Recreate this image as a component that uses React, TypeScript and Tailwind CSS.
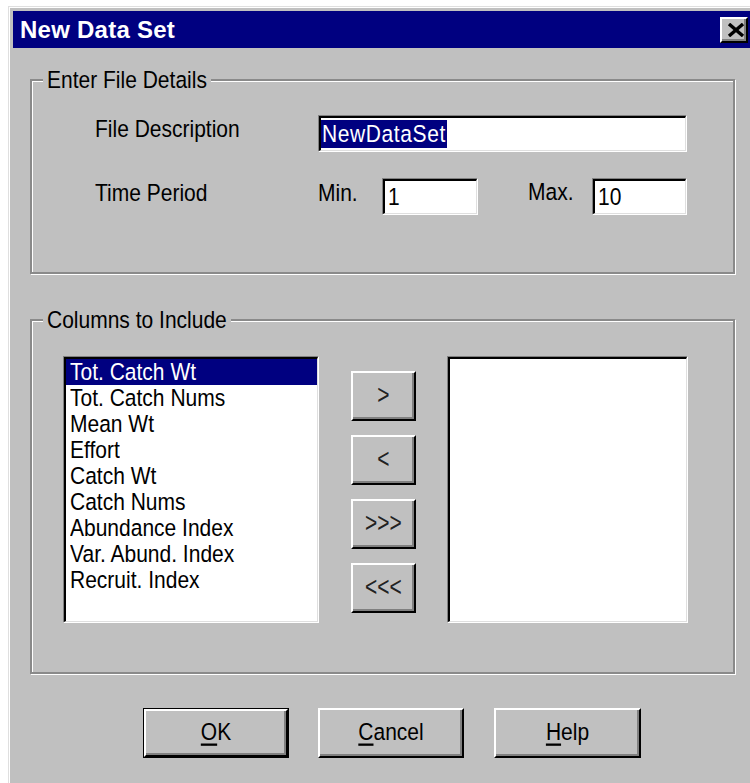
import React from "react";

const columns = [
  "Tot. Catch Wt",
  "Tot. Catch Nums",
  "Mean Wt",
  "Effort",
  "Catch Wt",
  "Catch Nums",
  "Abundance Index",
  "Var. Abund. Index",
  "Recruit. Index",
];

// Dialog text: the system font here is drawn a little taller than it is wide
function T({ children, className = "" }: { children?: React.ReactNode; className?: string }) {
  return <span className={`inline-block origin-center scale-y-[1.15] ${className}`}>{children}</span>;
}

// Sunken 3D field used by edit boxes and list boxes
function Sunken({ className = "", children }: { className?: string; children?: React.ReactNode }) {
  return (
    <div
      className={`border-t border-l border-t-[#808080] border-l-[#808080] border-b border-r border-b-white border-r-white ${className}`}
    >
      <div className="h-full w-full overflow-hidden border-t-2 border-l-2 border-t-black border-l-black border-b border-r border-b-[#dfdfdf] border-r-[#dfdfdf] bg-white">
        {children}
      </div>
    </div>
  );
}

// Raised 3D push button face
function Raised({ className = "", children }: { className?: string; children?: React.ReactNode }) {
  return (
    <div
      className={`flex items-center justify-center border-t-2 border-l-2 border-t-white border-l-white border-b-2 border-r-2 border-b-black border-r-black bg-[#c0c0c0] shadow-[inset_-2px_-2px_0_#808080] ${className}`}
    >
      {children}
    </div>
  );
}

// Etched group frame with caption sitting on the top edge
function Group({
  label,
  className = "",
  children,
}: {
  label: string;
  className?: string;
  children?: React.ReactNode;
}) {
  return (
    <div
      className={`relative border-2 border-[#8a8a8a] shadow-[inset_1px_1px_0_#fff,1px_1px_0_#fff] ${className}`}
    >
      <span className="absolute left-[11px] -top-[13px] bg-[#c0c0c0] px-[4px] leading-[24px]">
        <T>{label}</T>
      </span>
      {children}
    </div>
  );
}

function Mnemonic({ first, rest }: { first: string; rest: string }) {
  return (
    <T className="leading-[24px]">
      <span className="underline decoration-[1.5px] underline-offset-[3px]">{first}</span>
      {rest}
    </T>
  );
}

// Transfer button caption
function Arrows({ text }: { text: string }) {
  return <span className="inline-block scale-y-[1.3] leading-[24px] text-[#222]">{text}</span>;
}

export default function App() {
  return (
    <div className="w-[750px] h-[783px] overflow-hidden bg-white font-['Liberation_Sans',Arial,sans-serif] text-[21px] text-black">
      <div className="ml-[8px] mt-[6px] w-[760px] h-[800px] border-t border-l border-t-[#dfdfdf] border-l-[#dfdfdf]">
        <div className="h-full border-t border-l border-t-white border-l-white bg-[#c0c0c0] pt-[3px] pl-[3px]">
          {/* Caption bar */}
          <div className="flex h-[37px] w-[739px] items-center justify-between bg-[#000080] pl-[7px] pr-[4px]">
            <span className="text-[24px] font-bold tracking-[0.25px] text-white leading-[37px]">New Data Set</span>
            <Raised className="h-[26px] w-[28px] pl-[3px] pt-[1px]">
              <svg width="18" height="14" viewBox="0 0 18 14">
                <path d="M2 1 L16 13 M16 1 L2 13" stroke="#000" strokeWidth="3.4" fill="none" />
              </svg>
            </Raised>
          </div>

          {/* Enter File Details */}
          <Group label="Enter File Details" className="ml-[17px] mt-[31px] h-[195px] w-[705px]">
            <div className="pl-[63px] pt-[34px]">
              <div className="flex items-start">
                <span className="mt-[2px] w-[223px] leading-[24px]">
                  <T>File Description</T>
                </span>
                <Sunken className="h-[37px] w-[369px]">
                  <div className="flex h-full items-center">
                    <span className="h-[28px] bg-[#000080] px-[1px] leading-[28px] tracking-[0.6px] text-white">
                      <T>NewDataSet</T>
                    </span>
                  </div>
                </Sunken>
              </div>
              <div className="mt-[26px] flex items-start">
                <span className="mt-[3px] w-[223px] leading-[24px]">
                  <T>Time Period</T>
                </span>
                <span className="mt-[3px] w-[64px] leading-[24px]">
                  <T>Min.</T>
                </span>
                <Sunken className="h-[37px] w-[96px]">
                  <div className="flex h-full items-center pl-[3px] leading-[24px]">
                    <T>1</T>
                  </div>
                </Sunken>
                <span className="w-[50px]" />
                <span className="mt-[2px] w-[64px] leading-[24px]">
                  <T>Max.</T>
                </span>
                <Sunken className="h-[37px] w-[95px]">
                  <div className="flex h-full items-center pl-[3px] leading-[24px]">
                    <T>10</T>
                  </div>
                </Sunken>
              </div>
            </div>
          </Group>

          {/* Columns to Include */}
          <Group label="Columns to Include" className="ml-[17px] mt-[45px] h-[355px] w-[705px]">
            <div className="flex items-start pl-[31px] pt-[35px]">
              <Sunken className="h-[267px] w-[256px]">
                <ul>
                  {columns.map((c, i) => (
                    <li
                      key={c}
                      className={
                        i === 0
                          ? "h-[26px] bg-[#000080] pl-[4px] leading-[26px] text-white"
                          : "h-[26px] pl-[4px] leading-[26px]"
                      }
                    >
                      <T>{c}</T>
                    </li>
                  ))}
                </ul>
              </Sunken>
              <div className="ml-[32px] mt-[15px] flex flex-col gap-[14px]">
                <Raised className="h-[50px] w-[65px] pb-[2px]">
                  <Arrows text=">" />
                </Raised>
                <Raised className="h-[50px] w-[65px] pb-[2px]">
                  <Arrows text="<" />
                </Raised>
                <Raised className="h-[50px] w-[65px] pb-[2px]">
                  <Arrows text=">>>" />
                </Raised>
                <Raised className="h-[50px] w-[65px] pb-[2px]">
                  <Arrows text="<<<" />
                </Raised>
              </div>
              <Sunken className="ml-[31px] h-[267px] w-[241px]" />
            </div>
          </Group>

          {/* Dialog buttons */}
          <div className="mt-[34px] flex pl-[130px]">
            <div className="h-[50px] w-[146px] border border-black">
              <Raised className="h-full w-full pb-[3px]">
                <Mnemonic first="O" rest="K" />
              </Raised>
            </div>
            <Raised className="ml-[29px] h-[50px] w-[146px] pb-[3px]">
              <Mnemonic first="C" rest="ancel" />
            </Raised>
            <Raised className="ml-[30px] h-[50px] w-[147px] pb-[3px]">
              <Mnemonic first="H" rest="elp" />
            </Raised>
          </div>
        </div>
      </div>
    </div>
  );
}
